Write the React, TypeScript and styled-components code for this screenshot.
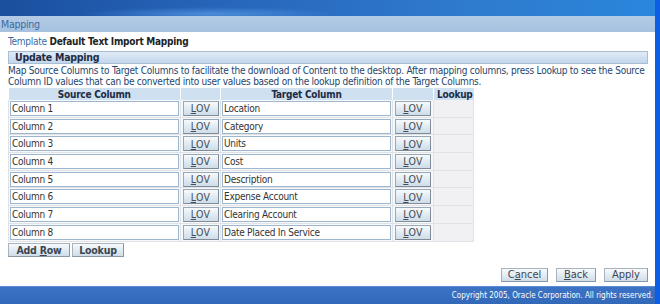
import styled, {createGlobalStyle} from "styled-components";

const FONT = `"DejaVu Sans Condensed", "DejaVu Sans", sans-serif`;

const GlobalStyle = createGlobalStyle`
    html, body {
        margin: 0;
        padding: 0;
        background: #ffffff;
    }
    body {
        font-family: ${FONT};
        font-size: 10px;
        letter-spacing: -0.25px;
        color: #222222;
    }
`;

const Page = styled.div`
    width: 660px;
    height: 304px;
    box-sizing: border-box;
    display: flex;
    flex-direction: column;
    border-right: 5px solid #0c5fe4;
    overflow: hidden;
`;

const Banner = styled.div`
    height: 16px;
    flex-shrink: 0;
    background:
        radial-gradient(ellipse 180px 10px at 210px 14px, rgba(120, 190, 255, 0.45), transparent 70%),
        linear-gradient(90deg, #1b4f9e 0%, #2766bb 35%, #2f7acd 70%, #2a86dc 100%);
`;

const TitleBar = styled.div`
    height: 16px;
    flex-shrink: 0;
    display: flex;
    align-items: center;
    padding-left: 1px;
    background: linear-gradient(180deg, #b3cbe5 0%, #a6c2e0 100%);
    color: #3b6aa5;
    font-size: 10.5px;
`;

const Content = styled.div`
    flex: 1;
    display: flex;
    flex-direction: column;
    padding: 4px 7px 0 8px;
`;

const TemplateRow = styled.div`
    height: 12px;
    line-height: 12px;
    color: #3b6aa5;
    font-size: 10px;
    b {
        color: #222222;
        font-weight: bold;
    }
`;

const SubHeader = styled.div`
    margin-top: 3px;
    height: 11px;
    line-height: 11px;
    padding-left: 6px;
    border: 1px solid #a9bdd3;
    background: linear-gradient(180deg, #e1ebf6 0%, #c2d6ec 100%);
    font-weight: bold;
    font-size: 10.5px;
    color: #1d2c45;
`;

const Instruction = styled.p`
    margin: 1px 0 0 0;
    line-height: 11px;
    color: #23466f;
`;

const Table = styled.table`
    border-collapse: collapse;
    margin-top: 1px;
    width: 465px;
    table-layout: fixed;
`;

const HeadCell = styled.th<{ $align?: string; $w: number }>`
    box-sizing: border-box;
    width: ${p => p.$w}px;
    height: 12px;
    padding: 0 1px;
    background: #cfe0f1;
    border-left: 1px solid #ffffff;
    font-weight: bold;
    font-size: 10px;
    line-height: 11px;
    color: #1d2c45;
    text-align: ${p => p.$align || "center"};
    &:first-child {
        border-left: none;
    }
`;

const Cell = styled.td<{ $gray?: boolean }>`
    height: 16.7px;
    padding: 0 1px;
    border: 1px solid #dfe2e7;
    border-top: none;
    background: ${p => (p.$gray ? "#f1f1f4" : "#f7f8fa")};
    vertical-align: middle;
`;

const TextField = styled.div`
    box-sizing: border-box;
    height: 15px;
    line-height: 13px;
    padding-left: 1px;
    background: #ffffff;
    border: 1px solid #9fb6cf;
    color: #333333;
    white-space: nowrap;
    overflow: hidden;
`;

const LovButton = styled.button`
    display: block;
    margin: 0 auto;
    box-sizing: border-box;
    width: 36px;
    height: 15px;
    padding: 0;
    border: 1px solid #9aa8b6;
    border-right-color: #7f8b98;
    border-bottom-color: #7f8b98;
    background: linear-gradient(180deg, #f7fafc 0%, #dde8f0 60%, #cedde9 100%);
    font-family: ${FONT};
    font-size: 10.5px;
    line-height: 12px;
    color: #444c55;
    letter-spacing: 0.3px;
`;

const ButtonRow = styled.div<{ $right?: boolean }>`
    display: flex;
    justify-content: ${p => (p.$right ? "flex-end" : "flex-start")};
    margin-top: ${p => (p.$right ? "11px" : "1px")};
    gap: ${p => (p.$right ? "8px" : "2px")};
`;

const ActionButton = styled.button<{ $bold?: boolean; $w: number }>`
    box-sizing: border-box;
    width: ${p => p.$w}px;
    height: 14px;
    padding: 0;
    border: 1px solid #a8b3be;
    border-right-color: #8b97a3;
    border-bottom-color: #8b97a3;
    background: linear-gradient(180deg, #f7fafc 0%, #dfe9f1 60%, #cfdde9 100%);
    font-family: ${FONT};
    font-size: ${p => (p.$bold ? "10.5px" : "11px")};
    font-weight: ${p => (p.$bold ? "bold" : "normal")};
    letter-spacing: ${p => (p.$bold ? "-0.2px" : "0")};
    line-height: 12px;
    color: #3d4650;
`;

const Footer = styled.div`
    height: 17px;
    flex-shrink: 0;
    display: flex;
    align-items: center;
    justify-content: flex-end;
    padding-right: 2px;
    background: linear-gradient(180deg, #3c73c4 0%, #3268b8 100%);
    color: #ffffff;
    font-size: 8px;
    letter-spacing: 0;
    border-top: 1px solid #5a8bd4;
`;

const rows = [
    ["Column 1", "Location"],
    ["Column 2", "Category"],
    ["Column 3", "Units"],
    ["Column 4", "Cost"],
    ["Column 5", "Description"],
    ["Column 6", "Expense Account"],
    ["Column 7", "Clearing Account"],
    ["Column 8", "Date Placed In Service"],
];

const Lov = () => (
    <LovButton><u>L</u>OV</LovButton>
);

export default function App() {
    return (
        <>
            <GlobalStyle/>
            <Page>
                <Banner/>
                <TitleBar>Mapping</TitleBar>
                <Content>
                    <TemplateRow>Template <b>Default Text Import Mapping</b></TemplateRow>
                    <SubHeader>Update Mapping</SubHeader>
                    <Instruction>
                        Map Source Columns to Target Columns to facilitate the download of Content to the desktop. After mapping columns, press Lookup to see the Source Column ID values that can be converted into user values based on the lookup definition of the Target Columns.
                    </Instruction>
                    <Table>
                        <thead>
                        <tr>
                            <HeadCell $w={172}>Source Column</HeadCell>
                            <HeadCell $w={40}/>
                            <HeadCell $w={172}>Target Column</HeadCell>
                            <HeadCell $w={41}/>
                            <HeadCell $w={40} $align="right">Lookup</HeadCell>
                        </tr>
                        </thead>
                        <tbody>
                        {rows.map(([src, target]) => (
                            <tr key={src}>
                                <Cell><TextField>{src}</TextField></Cell>
                                <Cell><Lov/></Cell>
                                <Cell><TextField>{target}</TextField></Cell>
                                <Cell><Lov/></Cell>
                                <Cell $gray/>
                            </tr>
                        ))}
                        </tbody>
                    </Table>
                    <ButtonRow>
                        <ActionButton $bold $w={62}>Add <u>R</u>ow</ActionButton>
                        <ActionButton $bold $w={52}>Lookup</ActionButton>
                    </ButtonRow>
                    <ButtonRow $right>
                        <ActionButton $w={47}>C<u>a</u>ncel</ActionButton>
                        <ActionButton $w={40}><u>B</u>ack</ActionButton>
                        <ActionButton $w={44}>Apply</ActionButton>
                    </ButtonRow>
                </Content>
                <Footer>Copyright 2005, Oracle Corporation. All rights reserved.</Footer>
            </Page>
        </>
    );
}
